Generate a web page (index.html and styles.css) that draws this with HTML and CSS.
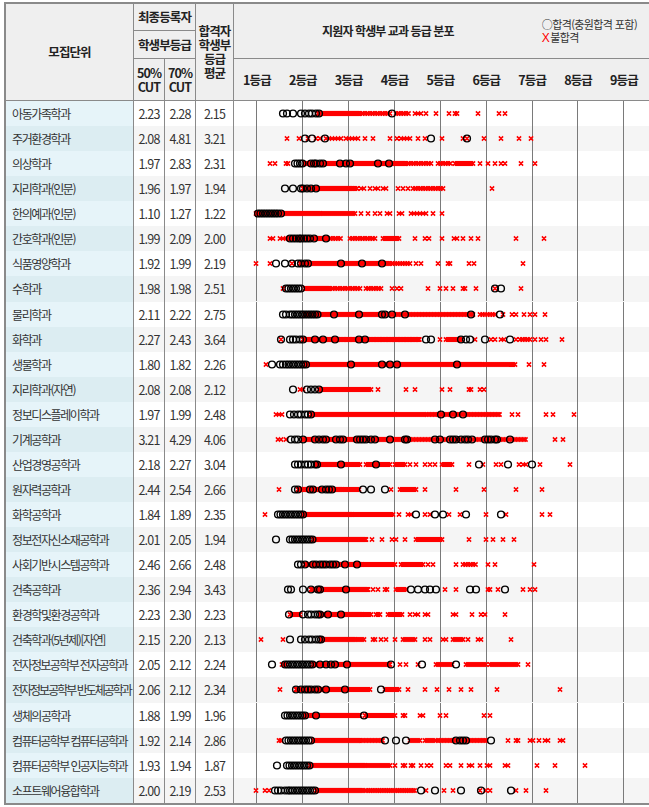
FILE: index.html
```html
<!DOCTYPE html>
<html lang="ko">
<head>
<meta charset="utf-8">
<title>지원자 학생부 교과 등급 분포</title>
<link rel="stylesheet" href="styles.css">
</head>
<body>
<table class="sheet">
  <colgroup>
    <col class="col-name"><col class="col-num"><col class="col-num"><col class="col-avg"><col class="col-chart">
  </colgroup>
  <thead>
    <tr class="h1">
      <th rowspan="3">모집단위</th>
      <th colspan="2">최종등록자</th>
      <th rowspan="3" class="avg-head">합격자<br>학생부<br>등급<br>평균</th>
      <th rowspan="2" class="chart-head">
        <div class="chart-head-in">
          <div class="chart-title">지원자 학생부 교과 등급 분포</div>
          <div class="legend">
            <div>○합격(충원합격 포함)</div>
            <div><span class="fail">X</span>불합격</div>
          </div>
        </div>
      </th>
    </tr>
    <tr class="h2">
      <th colspan="2">학생부등급</th>
    </tr>
    <tr class="h3">
      <th>50%<br>CUT</th>
      <th>70%<br>CUT</th>
      <th class="grades">
        <div class="grade-row">
          <span>1등급</span><span>2등급</span><span>3등급</span><span>4등급</span><span>5등급</span><span>6등급</span><span>7등급</span><span>8등급</span><span>9등급</span>
        </div>
      </th>
    </tr>
  </thead>
  <tbody>
    <tr><td class="name">아동가족학과</td><td class="num">2.23</td><td class="num">2.28</td><td class="num">2.15</td><td class="chart"><svg class="plot" width="415" height="25"></svg></td></tr>
    <tr><td class="name">주거환경학과</td><td class="num">2.08</td><td class="num">4.81</td><td class="num">3.21</td><td class="chart"><svg class="plot" width="415" height="25"></svg></td></tr>
    <tr><td class="name">의상학과</td><td class="num">1.97</td><td class="num">2.83</td><td class="num">2.31</td><td class="chart"><svg class="plot" width="415" height="25"></svg></td></tr>
    <tr><td class="name">지리학과(인문)</td><td class="num">1.96</td><td class="num">1.97</td><td class="num">1.94</td><td class="chart"><svg class="plot" width="415" height="25"></svg></td></tr>
    <tr><td class="name">한의예과(인문)</td><td class="num">1.10</td><td class="num">1.27</td><td class="num">1.22</td><td class="chart"><svg class="plot" width="415" height="25"></svg></td></tr>
    <tr><td class="name">간호학과(인문)</td><td class="num">1.99</td><td class="num">2.09</td><td class="num">2.00</td><td class="chart"><svg class="plot" width="415" height="25"></svg></td></tr>
    <tr><td class="name">식품영양학과</td><td class="num">1.92</td><td class="num">1.99</td><td class="num">2.19</td><td class="chart"><svg class="plot" width="415" height="25"></svg></td></tr>
    <tr><td class="name">수학과</td><td class="num">1.98</td><td class="num">1.98</td><td class="num">2.51</td><td class="chart"><svg class="plot" width="415" height="25"></svg></td></tr>
    <tr><td class="name">물리학과</td><td class="num">2.11</td><td class="num">2.22</td><td class="num">2.75</td><td class="chart"><svg class="plot" width="415" height="25"></svg></td></tr>
    <tr><td class="name">화학과</td><td class="num">2.27</td><td class="num">2.43</td><td class="num">3.64</td><td class="chart"><svg class="plot" width="415" height="25"></svg></td></tr>
    <tr><td class="name">생물학과</td><td class="num">1.80</td><td class="num">1.82</td><td class="num">2.26</td><td class="chart"><svg class="plot" width="415" height="25"></svg></td></tr>
    <tr><td class="name">지리학과(자연)</td><td class="num">2.08</td><td class="num">2.08</td><td class="num">2.12</td><td class="chart"><svg class="plot" width="415" height="25"></svg></td></tr>
    <tr><td class="name">정보디스플레이학과</td><td class="num">1.97</td><td class="num">1.99</td><td class="num">2.48</td><td class="chart"><svg class="plot" width="415" height="25"></svg></td></tr>
    <tr><td class="name">기계공학과</td><td class="num">3.21</td><td class="num">4.29</td><td class="num">4.06</td><td class="chart"><svg class="plot" width="415" height="25"></svg></td></tr>
    <tr><td class="name">산업경영공학과</td><td class="num">2.18</td><td class="num">2.27</td><td class="num">3.04</td><td class="chart"><svg class="plot" width="415" height="25"></svg></td></tr>
    <tr><td class="name">원자력공학과</td><td class="num">2.44</td><td class="num">2.54</td><td class="num">2.66</td><td class="chart"><svg class="plot" width="415" height="25"></svg></td></tr>
    <tr><td class="name">화학공학과</td><td class="num">1.84</td><td class="num">1.89</td><td class="num">2.35</td><td class="chart"><svg class="plot" width="415" height="25"></svg></td></tr>
    <tr><td class="name">정보전자신소재공학과</td><td class="num">2.01</td><td class="num">2.05</td><td class="num">1.94</td><td class="chart"><svg class="plot" width="415" height="25"></svg></td></tr>
    <tr><td class="name">사회기반시스템공학과</td><td class="num">2.46</td><td class="num">2.66</td><td class="num">2.48</td><td class="chart"><svg class="plot" width="415" height="25"></svg></td></tr>
    <tr><td class="name">건축공학과</td><td class="num">2.36</td><td class="num">2.94</td><td class="num">3.43</td><td class="chart"><svg class="plot" width="415" height="25"></svg></td></tr>
    <tr><td class="name">환경학및환경공학과</td><td class="num">2.23</td><td class="num">2.30</td><td class="num">2.23</td><td class="chart"><svg class="plot" width="415" height="25"></svg></td></tr>
    <tr><td class="name">건축학과(5년제)[자연]</td><td class="num">2.15</td><td class="num">2.20</td><td class="num">2.13</td><td class="chart"><svg class="plot" width="415" height="25"></svg></td></tr>
    <tr><td class="name tight">전자정보공학부 전자공학과</td><td class="num">2.05</td><td class="num">2.12</td><td class="num">2.24</td><td class="chart"><svg class="plot" width="415" height="25"></svg></td></tr>
    <tr><td class="name tighter">전자정보공학부 반도체공학과</td><td class="num">2.06</td><td class="num">2.12</td><td class="num">2.34</td><td class="chart"><svg class="plot" width="415" height="25"></svg></td></tr>
    <tr><td class="name">생체의공학과</td><td class="num">1.88</td><td class="num">1.99</td><td class="num">1.96</td><td class="chart"><svg class="plot" width="415" height="25"></svg></td></tr>
    <tr><td class="name tight">컴퓨터공학부 컴퓨터공학과</td><td class="num">1.92</td><td class="num">2.14</td><td class="num">2.86</td><td class="chart"><svg class="plot" width="415" height="25"></svg></td></tr>
    <tr><td class="name tight">컴퓨터공학부 인공지능학과</td><td class="num">1.93</td><td class="num">1.94</td><td class="num">1.87</td><td class="chart"><svg class="plot" width="415" height="25"></svg></td></tr>
    <tr><td class="name">소프트웨어융합학과</td><td class="num">2.00</td><td class="num">2.19</td><td class="num">2.53</td><td class="chart"><svg class="plot" width="415" height="25"></svg></td></tr>
  </tbody>
</table>
<script src="script.js"></script>
</body>
</html>
```

FILE: styles.css
```css
body {
  margin: 0;
  background: #ffffff;
  font-family: "Noto Sans CJK KR", "Noto Sans", sans-serif;
  color: #333333;
}

.sheet {
  border-collapse: separate;
  border-spacing: 0;
  table-layout: fixed;
  width: 645px;
  margin: 2px 0 0 4px;
  border-top: 2px solid #8a8a8a;
  border-left: 2px solid #8a8a8a;
  border-bottom: 2px solid #8a8a8a;
}

.col-name { width: 128px; }
.col-num { width: 31px; }
.col-avg { width: 38px; }
.col-chart { width: 415px; }

.sheet th {
  background: #efefef;
  color: #222222;
  font-weight: 700;
  font-size: 12.5px;
  letter-spacing: -0.9px;
  line-height: 14px;
  padding: 0;
  border-right: 1px solid #8a8a8a;
  border-bottom: 1px solid #8a8a8a;
  text-align: center;
  vertical-align: middle;
  white-space: nowrap;
}

.sheet th.chart-head,
.sheet th.grades {
  border-right: none;
}

.h1 { height: 27px; }
.h2 { height: 28px; }
.h3 { height: 42px; }

.avg-head {
  padding-top: 3px;
}

.chart-head-in {
  display: flex;
  align-items: center;
}

.chart-title {
  flex: 1;
  text-align: center;
  font-size: 12px;
  letter-spacing: -0.9px;
}

.legend {
  padding-right: 12px;
  text-align: left;
  font-weight: 400;
  font-size: 11px;
  letter-spacing: -0.6px;
  line-height: 13px;
  color: #333333;
}

.legend .fail {
  color: #ff0000;
  font-family: "Liberation Sans", Arial, sans-serif;
  font-size: 12px;
  margin-right: 1px;
}

.grade-row {
  display: flex;
}

.grade-row span {
  flex: none;
  width: 45.875px;
  text-align: center;
}

.sheet td {
  padding: 0;
  height: 25.07px;
  border-right: 1px solid #8a8a8a;
  vertical-align: middle;
  background: #ffffff;
}

.sheet td.chart {
  border-right: none;
}

.sheet td.name {
  background: #e6f4f9;
  padding-left: 6px;
  font-size: 12px;
  letter-spacing: -1.4px;
  white-space: nowrap;
  overflow: hidden;
  color: #333333;
}

.sheet td.name.tight {
  letter-spacing: -1.6px;
}

.sheet td.name.tighter {
  letter-spacing: -2px;
}

.sheet td.num {
  text-align: center;
  font-size: 12.5px;
  letter-spacing: -0.8px;
  color: #333333;
}

.sheet tbody tr:nth-child(even) td {
  background: #f5f5f5;
}

.sheet tbody tr:nth-child(even) td.name {
  background: #dcedf2;
}

.plot {
  display: block;
}

.plot .gl {
  fill: none;
  stroke: #7a7a7a;
  stroke-width: 1;
}

.plot .xm {
  fill: none;
  stroke: #ff0000;
  stroke-width: 1.5;
}

.plot .om circle {
  fill: none;
  stroke: #000000;
  stroke-width: 1.4;
}
```

FILE: script.js
```js
var ROWS = [
  {s:[[85,127,1],[127,157,2.5],[163,177,2.5]], x:[182,185,188,193,203,216,222,224,245,266,272], o:[50,54,60,68,72,76,79,83,86,159]},
  {s:[[93,110,3],[113,125,3],[168,178,3]], x:[54,66,75,83,87,132,140,157,164,185,192,209,230,234,251,268,286,298], o:[72,79,92,198,234]},
  {s:[[72,173,1],[173,200,2.5],[205,218,2.5],[222,238,2]], x:[37,42,53,55,240,247,255,262,268,272,288,302], o:[78,81,83,87,90,107,113,117,145,156], c:[[62,70]]},
  {s:[[70,120,1],[120,124,2],[180,210,2.5]], x:[128,131,137,142,145,150,153,165,170,175,259], o:[52,60,68,70,74,78,83]},
  {s:[[23,88,1],[88,123,2]], x:[128,135,142,147,154,157,166,169,178,181,184,187,190,193,200,209], o:[48], c:[[25,45]]},
  {s:[[55,93,1],[95,108,2.5],[117,143,2.5],[150,167,2]], x:[37,40,47,50,53,182,192,196,209,221,224,230,238,245,283,311], o:[57,60,63,66,68,71,74,77,81,93]},
  {s:[[67,157,1],[157,178,2.5]], x:[23,37,59,183,188,205,215,217,236,241,290], o:[43,52,59,65,68,72,75,108,129,149]},
  {s:[[72,97,1],[97,128,2.5],[133,150,2.5]], x:[50,159,164,168,195,207,213,220,230,232,243,262,288], o:[262,268], c:[[53,70]]},
  {s:[[72,150,1],[150,240,1.5],[247,263,2.5]], x:[270,279,283,291,297,302,312], o:[50,53,101,126,149,152,159,172,238,267], c:[[57,85]]},
  {s:[[70,187,1.2],[213,230,2],[287,298,2.5]], x:[48,207,242,258,262,268,271,283,302,308,313,329], o:[48,57,60,63,67,70,82,90,102,126,132,193,198,228,233,237,252,277]},
  {s:[[72,250,1],[250,283,2]], x:[33,296,311], o:[39,47,50,73,118,149,157,164,224], c:[[53,72]]},
  {s:[[86,138,2]], x:[67,70,145,173,182,209,217,236,238,247,251], o:[60,74,78,82,86]},
  {s:[[78,163,1],[163,193,2],[193,267,1.5]], x:[43,46,49,265,279,285,313,320,341], o:[57,61,65,68,72,75,78,208,220,230]},
  {s:[[70,177,1],[177,293,1.5]], x:[45,48,53,322,330], o:[58,62,65,70,82,86,90,93,103,107,110,124,127,130,133,138,142,157,172,174,202,207,217,220,223,228,232,235,239,252,255,258,262,264,277]},
  {s:[[83,113,1],[113,127,2],[133,157,2],[162,172,2],[209,220,2]], x:[177,183,192,197,202,236,250,263,268,286,290,293,307,337], o:[62,65,68,72,75,78,82,84,108,143,246,275,299]},
  {s:[[65,110,1],[110,127,2],[167,183,2]], x:[46,158,192,223,251,283,309], o:[62,65,77,80,89,93,96,99,130,138,152]},
  {s:[[70,120,1],[120,160,2]], x:[32,166,175,178,192,197,216,227,253,273,309,317], o:[183,202,210,233,268], c:[[45,70]]},
  {s:[[80,133,1],[183,210,2]], x:[139,149,159,163,172,236,253,260,270,281], o:[43], c:[[57,80]]},
  {s:[[72,130,1],[130,163,2],[168,190,2],[230,243,2.5]], x:[195,200,223,255,262,301], o:[65,68,72,80,83,87,90,93,97,100,103,112,124]},
  {s:[[78,135,1],[163,173,2]], x:[140,145,152,154,212,223,255,257,265,290,297,302], o:[55,58,70,78,85,87,113,178,185,192,197,203,237,243,272]},
  {s:[[57,68,2],[87,130,1],[130,138,2],[143,147,2],[155,170,2]], x:[177,182,185,192,195,220,223,239,248,252,272], o:[56,70,75,78,82,85,87,95,108]},
  {s:[[88,123,1],[123,132,2],[170,183,2],[220,230,2]], x:[28,50,140,142,148,153,162,192,197,210,213,235,245,248,278], o:[57,68,72,76,79,83,86,88]},
  {s:[[49,53,2],[80,157,1],[203,220,2],[233,253,2],[257,285,2]], x:[167,173,185,295], o:[39,87,93,98,102,114,158,189,223], c:[[52,80]]},
  {s:[[63,113,1],[113,138,2],[152,167,2]], x:[47,175,192,204,216,228,238,264,327], o:[63,68,72,75,78,82,85,93,112,148]},
  {s:[[72,127,1],[132,163,2]], x:[170,172,187,190,207,213,251,257], o:[83,131], c:[[52,72]]},
  {s:[[80,127,1],[127,150,1.5],[177,187,2],[192,202,2],[205,253,1.5]], x:[46,48,275,283,285,297,300,306,312,315,327,330], o:[152,163,173,223,227,230,233,258], c:[[53,80]]},
  {s:[[77,133,1],[133,157,2]], x:[162,170,172,178,180,188,194,198,213,217,228,236,239,247,254,257,272,275,304,322,352], o:[44], c:[[54,77]]},
  {s:[[83,130,1],[133,182,1.8]], x:[23,32,36,193,211,220,247,253,257,283,293,313], o:[42,45,48,52,55,188,202,228,248,278], c:[[57,83]]}
];

(function () {
  var Y = 12.5, OFF = -1, H = 2.1;
  function gridX(k) { return Math.round(22.3 + k * 45.875) + 0.5; }
  var plots = document.querySelectorAll('.plot');
  for (var i = 0; i < plots.length; i++) {
    var r = ROWS[i];
    if (!r) continue;
    var g = '';
    for (var k = 0; k < 9; k++) g += 'M' + gridX(k) + ',0V25';
    var xs = [];
    (r.s || []).forEach(function (seg) {
      for (var v = seg[0]; v <= seg[1] + 0.01; v += seg[2]) xs.push(v);
    });
    xs = xs.concat(r.x || []);
    var d = xs.map(function (v) {
      var x = +(v + OFF).toFixed(2);
      return 'M' + (x - H) + ',' + (Y - H) + 'L' + (x + H) + ',' + (Y + H) +
             'M' + (x - H) + ',' + (Y + H) + 'L' + (x + H) + ',' + (Y - H);
    }).join('');
    var os = (r.o || []).slice();
    (r.c || []).forEach(function (seg) {
      for (var v = seg[0]; v <= seg[1] + 0.01; v += 2.5) os.push(v);
    });
    var circles = os.map(function (v) {
      return '<circle cx="' + (v + OFF) + '" cy="' + Y + '" r="3.4"/>';
    }).join('');
    plots[i].innerHTML = '<path class="gl" d="' + g + '"/><path class="xm" d="' + d + '"/><g class="om">' + circles + '</g>';
  }
})();
```
